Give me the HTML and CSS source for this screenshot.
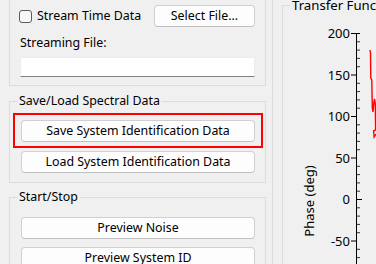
FILE: index.html
```html
<!DOCTYPE html>
<html>
<head>
<meta charset="utf-8">
<link rel="stylesheet" href="styles.css">
</head>
<body>
<div class="left">
  <div class="group g1">
    <div class="row">
      <label class="check"><span class="box"></span><span>Stream Time Data</span></label>
      <button class="btn sel">Select File...</button>
    </div>
    <div class="lbl">Streaming File:</div>
    <div class="edit"></div>
  </div>

  <div class="group g2">
    <span class="title">Save/Load Spectral Data</span>
    <div class="hilite">
      <button class="btn wide">Save System Identification Data</button>
    </div>
    <button class="btn wide load">Load System Identification Data</button>
  </div>

  <div class="group g3">
    <span class="title">Start/Stop</span>
    <button class="btn wide">Preview Noise</button>
    <button class="btn wide next">Preview System ID</button>
  </div>
</div>

<div class="right">
  <div class="plotgroup">
    <span class="title ptitle">Transfer Function</span>
    <svg class="plot" width="93" height="258" viewBox="283 6 93 258" xmlns="http://www.w3.org/2000/svg">
      <g class="minor" stroke="#333" stroke-width="1">
        <line x1="356" y1="41.8" x2="360" y2="41.8"/>
        <line x1="356" y1="50.1" x2="360" y2="50.1"/>
        <line x1="356" y1="58.4" x2="360" y2="58.4"/>
        <line x1="356" y1="66.7" x2="360" y2="66.7"/>
        <line x1="356" y1="83.3" x2="360" y2="83.3"/>
        <line x1="356" y1="91.6" x2="360" y2="91.6"/>
        <line x1="356" y1="99.9" x2="360" y2="99.9"/>
        <line x1="356" y1="108.2" x2="360" y2="108.2"/>
        <line x1="356" y1="124.8" x2="360" y2="124.8"/>
        <line x1="356" y1="133.1" x2="360" y2="133.1"/>
        <line x1="356" y1="141.4" x2="360" y2="141.4"/>
        <line x1="356" y1="149.7" x2="360" y2="149.7"/>
        <line x1="356" y1="166.3" x2="360" y2="166.3"/>
        <line x1="356" y1="174.6" x2="360" y2="174.6"/>
        <line x1="356" y1="182.9" x2="360" y2="182.9"/>
        <line x1="356" y1="191.2" x2="360" y2="191.2"/>
        <line x1="356" y1="207.8" x2="360" y2="207.8"/>
        <line x1="356" y1="216.1" x2="360" y2="216.1"/>
        <line x1="356" y1="224.4" x2="360" y2="224.4"/>
        <line x1="356" y1="232.7" x2="360" y2="232.7"/>
        <line x1="356" y1="249.3" x2="360" y2="249.3"/>
        <line x1="356" y1="257.6" x2="360" y2="257.6"/>
      </g>
      <g stroke="#000" stroke-width="1">
        <line x1="356.5" y1="33" x2="356.5" y2="264"/>
        <line x1="351" y1="33.5" x2="360" y2="33.5"/>
        <line x1="351" y1="75" x2="356" y2="75"/>
        <line x1="351" y1="116.5" x2="356" y2="116.5"/>
        <line x1="351" y1="158" x2="356" y2="158"/>
        <line x1="356" y1="199.5" x2="362" y2="199.5"/>
        <line x1="351" y1="241" x2="356" y2="241"/>
      </g>
      <g class="ticklbl" text-anchor="end">
        <text x="350" y="38">200</text>
        <text x="350" y="79.5">150</text>
        <text x="350" y="121">100</text>
        <text x="350" y="162.5">50</text>
        <text x="350" y="204">0</text>
        <text x="350" y="245.5">-50</text>
      </g>
      <text class="ylabel" x="314" y="201" text-anchor="middle" transform="rotate(-90 314 201)">Phase (deg)</text>
      <path d="M370,50 L370.5,53 L370.8,78 L371.8,80 L372.3,108 L373,112 L373.8,103 L374.6,99 L375.3,104 L375.6,130 L373.6,131 L374.2,137 L376,134" fill="none" stroke="#ff0000" stroke-width="1.4"/>
    </svg>
  </div>
</div>
</body>
</html>
```

FILE: styles.css
```css
html, body {
  margin: 0;
  padding: 0;
}
body {
  background: #f0f0f0;
  width: 376px;
  height: 264px;
  overflow: hidden;
  display: flex;
  font-family: "Segoe UI", "Noto Sans", sans-serif;
  font-size: 12.4px;
  color: #000;
}
.left {
  width: 273px;
  flex: none;
  box-sizing: border-box;
  padding-left: 9px;
  border-right: 1px solid #dcdcdc;
}
.group {
  position: relative;
  width: 257px;
  box-sizing: border-box;
  border: 1px solid #dcdcdc;
}
.title {
  position: absolute;
  left: 7px;
  top: -9px;
  padding: 0 2px;
  background: #f0f0f0;
  line-height: 16px;
  white-space: nowrap;
}
.g1 {
  margin-top: -10px;
  padding: 14px 10px 8px 10px;
}
.row {
  display: flex;
  align-items: center;
  justify-content: space-between;
  height: 22px;
}
.check {
  display: flex;
  align-items: center;
  gap: 5px;
  margin-left: -1px;
  line-height: 16px;
}
.box {
  width: 11px;
  height: 11px;
  border: 1px solid #5c5c5c;
  border-radius: 3px;
  background: #f7f7f7;
  margin-top: 1px;
}
.btn {
  display: block;
  box-sizing: border-box;
  height: 22px;
  padding: 0;
  margin: 0;
  font: inherit;
  color: #000;
  background: #fdfdfd;
  border: 1px solid #d0d0d0;
  border-bottom-color: #c0c0c0;
  border-radius: 4px;
  line-height: 20px;
  text-align: center;
}
.sel {
  width: 101px;
}
.lbl {
  margin-top: 8px;
  line-height: 16px;
}
.edit {
  margin-top: 6px;
  height: 20px;
  box-sizing: border-box;
  width: 235px;
  background: #fff;
  border: 1px solid #ececec;
  border-bottom: 1px solid #808080;
  border-radius: 2px 2px 0 0;
}
.g2 {
  margin-top: 15px;
  padding: 11px 0 9px 0;
}
.hilite {
  width: 250px;
  box-sizing: border-box;
  margin-left: 3px;
  border: 2px solid #ff0000;
  padding: 5px 6px 4px 6px;
}
.wide {
  width: 234px;
}
.load {
  margin: 3px 0 0 11px;
}
.g3 {
  margin-top: 14px;
  padding: 19px 0 20px 11px;
}
.next {
  margin-top: 8px;
}
.right {
  flex: 1;
  padding: 5px 0 0 9px;
  overflow: hidden;
}
.plotgroup {
  position: relative;
  border-left: 1px solid #dcdcdc;
  border-top: 1px solid #dcdcdc;
  height: 300px;
}
.ptitle {
  font-size: 13.2px;
}
.plot {
  display: block;
}
.ticklbl text, .ylabel {
  font-family: "Segoe UI", "Noto Sans", sans-serif;
  font-size: 13px;
  fill: #000;
}
```
